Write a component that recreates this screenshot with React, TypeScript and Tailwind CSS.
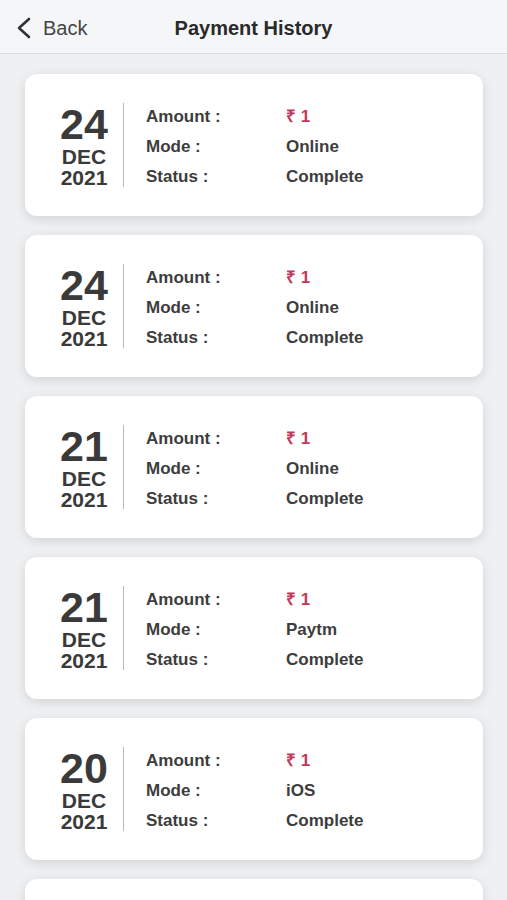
import React from 'react';

type Payment = {
    day: string;
    month: string;
    year: string;
    amount: string;
    mode: string;
    status: string;
};

const payments: Payment[] = [
    { day: '24', month: 'DEC', year: '2021', amount: '₹ 1', mode: 'Online', status: 'Complete' },
    { day: '24', month: 'DEC', year: '2021', amount: '₹ 1', mode: 'Online', status: 'Complete' },
    { day: '21', month: 'DEC', year: '2021', amount: '₹ 1', mode: 'Online', status: 'Complete' },
    { day: '21', month: 'DEC', year: '2021', amount: '₹ 1', mode: 'Paytm', status: 'Complete' },
    { day: '20', month: 'DEC', year: '2021', amount: '₹ 1', mode: 'iOS', status: 'Complete' },
    { day: '20', month: 'DEC', year: '2021', amount: '₹ 1', mode: 'Online', status: 'Complete' },
];

function PaymentCard({ p }: { p: Payment }) {
    return (
        <div className="h-[142px] shrink-0 rounded-[12px] bg-white shadow-[0_3px_12px_rgba(0,0,0,0.12)] flex items-center pl-[35px]">
            <div className="w-12 text-center font-bold text-[#3a3a3a]">
                <div className="text-[43px] leading-[43px]">{p.day}</div>
                <div className="text-[21px] leading-[21px]">{p.month}</div>
                <div className="text-[21px] leading-[21px]">{p.year}</div>
            </div>
            <div className="ml-[15px] w-px h-[84px] bg-[#b8b8b8]" />
            <div className="ml-[22px] text-[17px] leading-[30px] font-bold text-[#3d3d3d] mt-[4px]">
                <div className="flex">
                    <span className="w-[140px]">Amount :</span>
                    <span className="text-[#c13a5c]">{p.amount}</span>
                </div>
                <div className="flex">
                    <span className="w-[140px]">Mode :</span>
                    <span>{p.mode}</span>
                </div>
                <div className="flex">
                    <span className="w-[140px]">Status :</span>
                    <span>{p.status}</span>
                </div>
            </div>
        </div>
    );
}

export default function App() {
    return (
        <div
            className="h-[900px] overflow-hidden bg-[#eef0f2]"
            style={{ fontFamily: '"Liberation Sans", Arial, sans-serif' }}
        >
            <div className="h-[54px] bg-[#f5f6f8] border-b border-[#dcdee1] relative flex items-center pt-[2px]">
                <div className="flex items-center pl-[16px] text-[20px] text-[#454545]">
                    <svg width="16" height="22" viewBox="0 0 16 22" fill="none">
                        <polyline points="13,2 3,11 13,20" stroke="#333" strokeWidth="2.6" strokeLinecap="round" strokeLinejoin="round" />
                    </svg>
                    <span className="ml-[11px]">Back</span>
                </div>
                <div className="absolute inset-x-0 text-center text-[20px] font-bold text-[#2a2a2a] pointer-events-none">
                    Payment History
                </div>
            </div>
            <div className="pl-[25px] pr-[24px] pt-[20px] flex flex-col gap-[19px]">
                {payments.map((p, i) => (
                    <PaymentCard key={i} p={p} />
                ))}
            </div>
        </div>
    );
}
